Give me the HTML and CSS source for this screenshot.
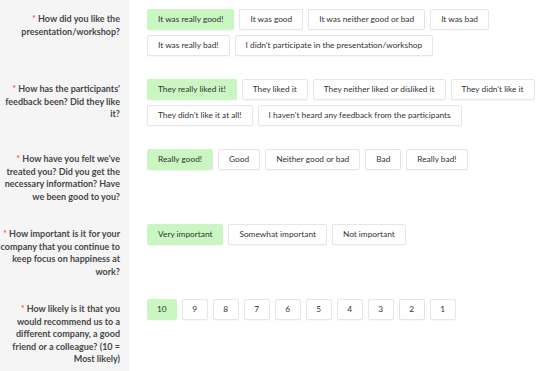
FILE: index.html
```html
<!DOCTYPE html>
<html lang="en">
<head>
    <meta charset="UTF-8">
    <meta name="viewport" content="width=device-width, initial-scale=1.0">
    <title>Workshop feedback</title>
    <link rel="stylesheet" href="styles.css">
</head>
<body>

    <div class="survey">

        <div class="question">
            <div class="label"><span class="req">*</span> How did you like the<br>presentation/workshop?</div>
            <div class="options">
                <button class="opt selected">It was really good!</button>
                <button class="opt">It was good</button>
                <button class="opt">It was neither good or bad</button>
                <button class="opt">It was bad</button>
                <button class="opt">It was really bad!</button>
                <button class="opt">I didn't participate in the presentation/workshop</button>
            </div>
        </div>

        <div class="question">
            <div class="label"><span class="req">*</span> How has the participants'<br>feedback been? Did they like<br>it?</div>
            <div class="options">
                <button class="opt selected">They really liked it!</button>
                <button class="opt">They liked it</button>
                <button class="opt">They neither liked or disliked it</button>
                <button class="opt">They didn't like it</button>
                <button class="opt">They didn't like it at all!</button>
                <button class="opt">I haven't heard any feedback from the participants</button>
            </div>
        </div>

        <div class="question">
            <div class="label"><span class="req">*</span> How have you felt we've<br>treated you? Did you get the<br>necessary information? Have<br>we been good to you?</div>
            <div class="options">
                <button class="opt selected">Really good!</button>
                <button class="opt">Good</button>
                <button class="opt">Neither good or bad</button>
                <button class="opt">Bad</button>
                <button class="opt">Really bad!</button>
            </div>
        </div>

        <div class="question">
            <div class="label"><span class="req">*</span> How important is it for your<br>company that you continue to<br>keep focus on happiness at<br>work?</div>
            <div class="options">
                <button class="opt selected">Very important</button>
                <button class="opt">Somewhat important</button>
                <button class="opt">Not important</button>
            </div>
        </div>

        <div class="question">
            <div class="label"><span class="req">*</span> How likely is it that you<br>would recommend us to a<br>different company, a good<br>friend or a colleague? (10 =<br>Most likely)</div>
            <div class="options">
                <button class="opt num selected">10</button>
                <button class="opt num">9</button>
                <button class="opt num">8</button>
                <button class="opt num">7</button>
                <button class="opt num">6</button>
                <button class="opt num">5</button>
                <button class="opt num">4</button>
                <button class="opt num">3</button>
                <button class="opt num">2</button>
                <button class="opt num">1</button>
            </div>
        </div>

    </div>

</body>
</html>
```

FILE: styles.css
```css
html, body {
    height: 100%;
}

body {
    margin: 0;
    font-family: 'Lato', 'Liberation Sans', sans-serif;
    font-size: 9px;
    color: #333;
    background: #fff;
}

.survey {
    min-height: 100%;
    background: linear-gradient(to right, #f5f5f5 129px, #fff 129px);
}

.question {
    display: flex;
    align-items: flex-start;
    padding: 9px 0 12px;
}

.label {
    width: 129px;
    flex-shrink: 0;
    box-sizing: border-box;
    padding: 4px 9px 0 0;
    text-align: right;
    white-space: nowrap;
    font-weight: 700;
    line-height: 12.5px;
    color: #474747;
}

.req {
    color: #e0474c;
    font-weight: 400;
}

.options {
    flex: 1;
    display: flex;
    flex-wrap: wrap;
    gap: 5px;
    padding: 0 0 2px 18px;
}

.opt {
    margin: 0;
    font-family: inherit;
    font-size: 8.3px;
    line-height: 11px;
    color: #333;
    background: #fff;
    border: 1px solid #e6e6e6;
    border-radius: 2px;
    padding: 4px 10px;
    box-shadow: 0 1px 1px rgba(0, 0, 0, 0.03);
    cursor: pointer;
}

.opt.selected {
    background: #c9f6c1;
    border-color: #c9f6c1;
}

.opt.num {
    min-width: 26px;
    padding: 4px 9px;
}
```
